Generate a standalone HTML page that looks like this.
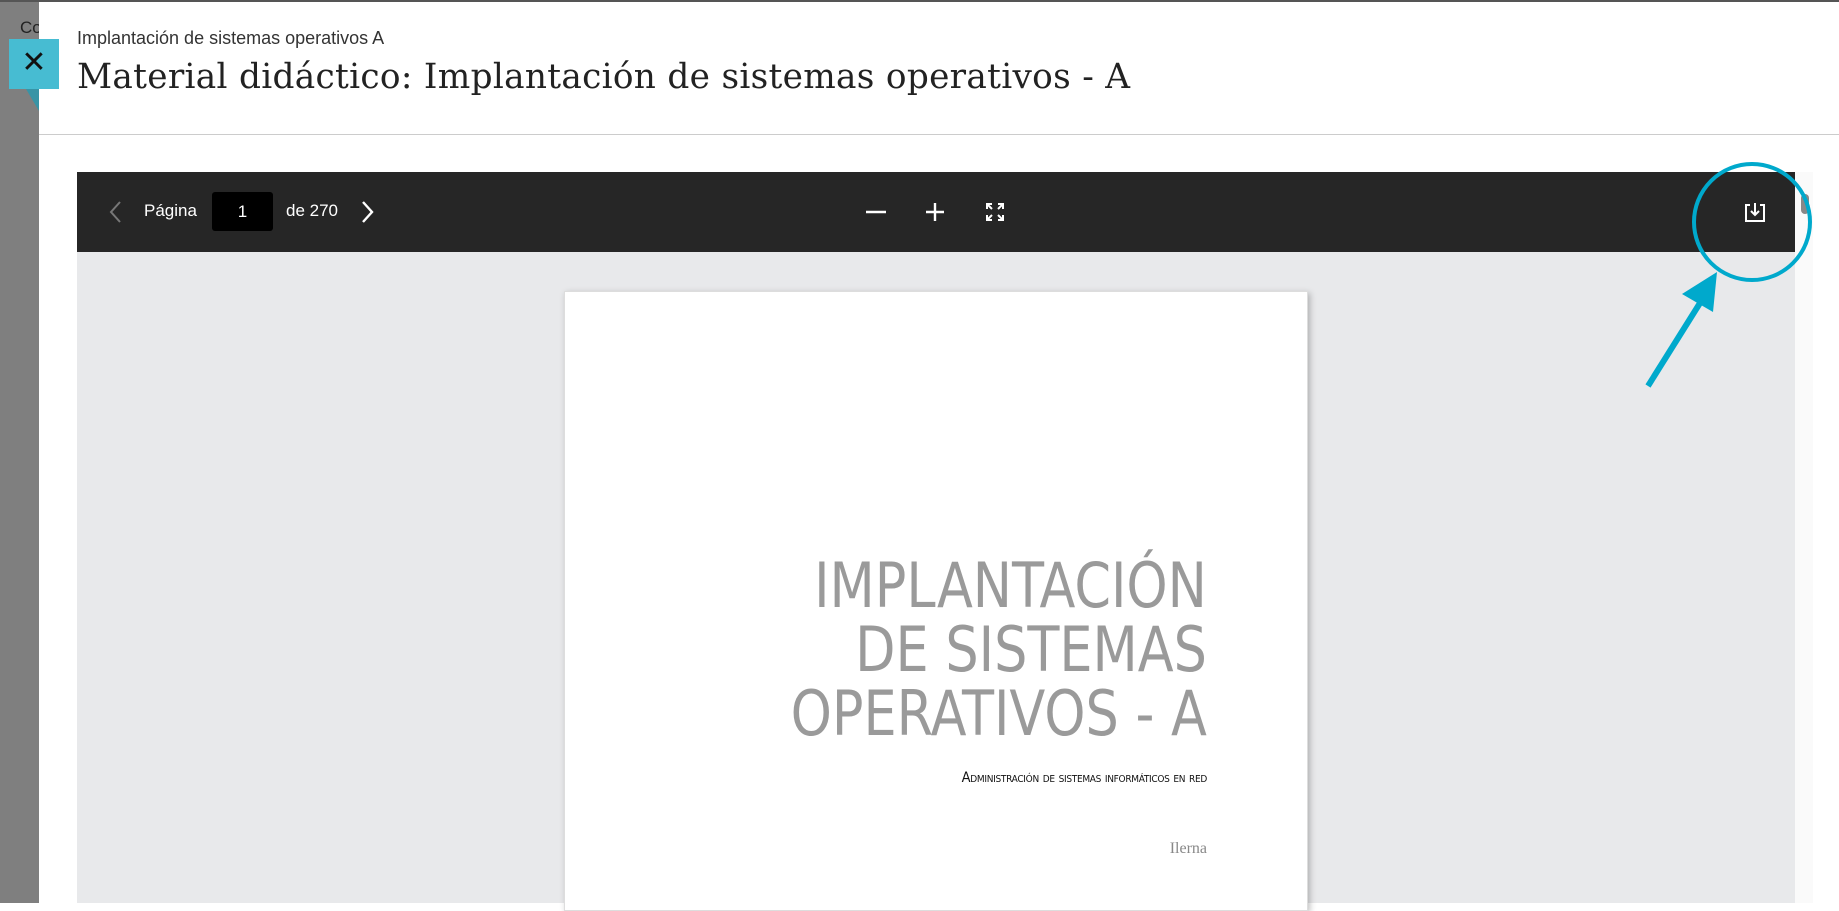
<!DOCTYPE html>
<html><head><meta charset="utf-8"><style>
*{margin:0;padding:0;box-sizing:border-box}
body{width:1839px;height:903px;overflow:hidden;background:#fff;position:relative;font-family:"Liberation Sans",sans-serif}
.left{position:absolute;left:0;top:0;width:39px;height:903px;background:#7f7f7f;border-top:2px solid #444}
.topline{position:absolute;left:0;top:0;width:1839px;height:2px;background:#555}
.co{position:absolute;left:20px;top:18px;font-size:17px;color:#222}
.panel{position:absolute;left:39px;top:2px;width:1800px;height:901px;background:#fff}
.sub{position:absolute;left:77px;top:28px;font-size:18px;color:#333}
.title{position:absolute;left:77px;top:57px;font-family:"DejaVu Serif","Liberation Serif",serif;font-size:34.3px;color:#222;letter-spacing:0.3px}
.hr{position:absolute;left:39px;top:134px;width:1800px;height:1px;background:#ccc}
.close{position:absolute;left:9px;top:39px;width:50px;height:50px;background:#47bcd2;color:#111;font-size:30px;text-align:center;line-height:48px}
.fold{position:absolute;left:26px;top:89px;width:0;height:0;border-top:22px solid #3894a6;border-left:13px solid transparent}
.tb{position:absolute;left:77px;top:172px;width:1718px;height:80px;background:#262626;color:#fff}
.grey{position:absolute;left:77px;top:252px;width:1718px;height:651px;background:#e8e9eb}
.scr{position:absolute;left:1795px;top:172px;width:18px;height:731px;background:#fafafa}
.page{position:absolute;left:564px;top:291px;width:744px;height:620px;background:#fff;box-shadow:2px 2px 6px rgba(0,0,0,.25);border:1px solid #ddd}
.big{position:absolute;right:100px;top:262px;text-align:right;font-family:"DejaVu Sans Condensed","Liberation Sans Narrow","Liberation Sans",sans-serif;font-size:62px;line-height:64px;color:#9a9a9a;font-weight:300;transform:scaleX(0.94);transform-origin:right}
.sm{position:absolute;right:100px;top:478px;font-size:14.5px;color:#111;font-variant:small-caps;letter-spacing:-0.3px;font-family:"DejaVu Sans Condensed",sans-serif}
.il{position:absolute;right:100px;top:548px;font-family:"Liberation Serif",serif;font-size:16px;color:#888}
</style></head><body>
<div class="left"></div><div class="topline"></div>
<div class="co">Co</div>
<div class="panel"></div>
<div class="sub">Implantación de sistemas operativos A</div>
<div class="title">Material didáctico: Implantación de sistemas operativos - A</div>
<div class="hr"></div>
<div class="fold"></div>
<div class="close">✕</div>
<div class="tb">
<svg style="position:absolute;left:31px;top:28px" width="14" height="24"><path d="M12 2L3 12l9 10" stroke="#777" stroke-width="2" fill="none"/></svg>
<div style="position:absolute;left:67px;top:29px;font-size:17px">Página</div>
<div style="position:absolute;left:135px;top:20px;width:61px;height:39px;background:#000;border-radius:3px;text-align:center;line-height:39px;font-size:17px">1</div>
<div style="position:absolute;left:209px;top:29px;font-size:17px">de 270</div>
<svg style="position:absolute;left:284px;top:28px" width="14" height="24"><path d="M2 2l9 10-9 10" stroke="#fff" stroke-width="2.4" fill="none"/></svg>
<svg style="position:absolute;left:788px;top:29px" width="22" height="22"><path d="M1 11h20" stroke="#fff" stroke-width="2.4"/></svg>
<svg style="position:absolute;left:848px;top:29px" width="22" height="22"><path d="M1 11h18M10 2v18" stroke="#fff" stroke-width="2.4"/></svg>
<svg style="position:absolute;left:908px;top:30px" width="20" height="20" fill="none" stroke="#fff" stroke-width="2"><path d="M2 7V2h5M13 2h5v5M18 13v5h-5M7 18H2v-5M2 2l5 5M18 2l-5 5M18 18l-5-5M2 18l5-5"/></svg>
<svg style="position:absolute;left:1667px;top:29px" width="22" height="22" fill="none" stroke="#fff" stroke-width="2"><path d="M6 4H2v16h18V4h-4"/><path d="M11 2v12M7 10l4 4 4-4"/></svg>
</div>
<div class="grey"></div>
<div class="scr"><div style="position:absolute;left:6px;top:22px;width:8px;height:20px;background:#888;border-radius:4px"></div></div>
<div class="page">
<div class="big">IMPLANTACIÓN<br>DE SISTEMAS<br>OPERATIVOS - A</div>
<div class="sm">Administración de sistemas informáticos en red</div>
<div class="il">Ilerna</div>
</div>
<svg style="position:absolute;left:0;top:0" width="1839" height="903">
<circle cx="1752" cy="222" r="58" fill="none" stroke="#00a9cc" stroke-width="4"/>
<path d="M1648 386L1700 303" stroke="#00a9cc" stroke-width="6"/>
<path d="M1717 272L1682 294L1713 312Z" fill="#00a9cc"/>
</svg>
</body></html>
